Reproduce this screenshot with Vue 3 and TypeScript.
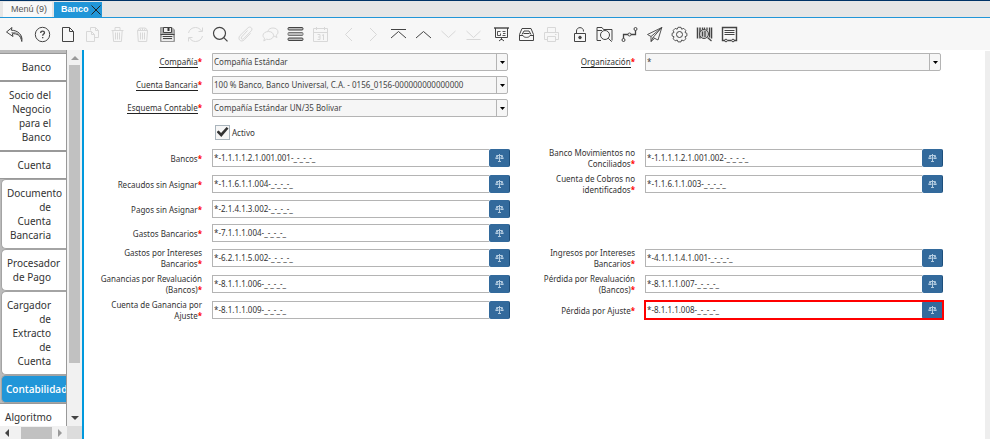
<script setup lang="ts">
import { ref } from 'vue'

interface Tool { id: string; label: string; off?: boolean; svg: string }
interface Combo { id: string; label: string; value: string }
interface Account { id: string; label: string; value: string; marked?: boolean }

const toolGroups: Tool[][] = [
  [
    { id: 'undo', label: 'Deshacer', svg: '<path d="M6 1.500.5 6l6.500 4.500-.7-2.800C11 7.500 14.500 9 15.800 15.500 17 9 12 4.300 5.300 4.200z"/><path d="M5.500 6.500c5-.5 9 2 10.300 6.500" stroke-width=".6"/>' },
  ],
  [
    { id: 'help', label: 'Ayuda', svg: '<circle cx="8.500" cy="8.500" r="7.200"/><path d="M6.700 7c0-1.200.8-1.800 1.900-1.800s1.900.7 1.900 1.600c0 1.300-1.800 1.300-1.800 2.900M8.700 11v1.200" stroke-width="1.300"/>' },
    { id: 'new', label: 'Nuevo', svg: '<path d="M3.500 1.500h7l4 4v10h-11zM10.500 1.500v4h4"/>' },
    { id: 'copy', label: 'Copiar', off: true, svg: '<path d="M6.500 4.500v-3h5l3 3v7h-4M11.500 1.500v3h3M2.500 5.500h5l3 3v7h-8zM7.500 5.500v3h3"/>' },
    { id: 'delete', label: 'Eliminar', off: true, svg: '<path d="M2.500 4.500h12M6 4.500v-3h5v3M3.800 4.500l.8 11h7.800l.8-11M6.500 6.500v7M8.500 6.500v7M10.500 6.500v7"/>' },
    { id: 'deleteAll', label: 'Eliminar selección', off: true, svg: '<path d="M3.500 4.500h10l-.8 11H4.300zM3.500 4.500 5.500 2h6l2 2.500M5.500 2l1.500 2.500M8.500 2v2.500M11.500 2 10 4.500M6.500 6.500v7M8.500 6.500v7M10.500 6.500v7"/>' },
    { id: 'save', label: 'Guardar', svg: '<path d="M1.500 1.500H13L15.500 4v11.500h-14z" fill="#aaa" stroke="#999"/><path d="M4.500 1.500v5h8v-5z" fill="#eee" stroke="#444"/><path d="M9.500 2v3" stroke="#333" stroke-width="2"/><path d="M3 9.500h11M3 11.500h11v3H3z" fill="#ddd" stroke="#eee"/><path d="M1.500 8.500h14M4 10.500h9M4 12.500h9" stroke="#444"/>' },
  ],
  [
    { id: 'refresh', label: 'Refrescar', off: true, svg: '<path d="M1.500 7C2.200 3.700 5 1.500 8.500 1.500c2.500 0 4.700 1.300 6 3.500M15.500 1.500v4h-4M15.500 10c-.7 3.300-3.500 5.500-7 5.500-2.500 0-4.700-1.300-6-3.500M1.500 15.500v-4h4"/>' },
    { id: 'find', label: 'Buscar', svg: '<circle cx="7.500" cy="7.300" r="6" stroke-width="1.200"/><path d="m11.800 11.600 3.700 3.700" stroke-width="1.200"/>' },
    { id: 'attach', label: 'Adjunto', off: true, svg: '<path d="m10.500 4.500-6 6.500c-1 1.500.6 3 2 1.800l7.800-8c2-2.500-1.300-5-3.300-3L3 9.500c-3 3.500 1 7.500 4.300 4.300l6.200-6.500"/>' },
    { id: 'chat', label: 'Chat', off: true, svg: '<path d="M6 5C6.500 3 8.500 2 11 2c3 0 5 1.700 5 4 0 1.500-.7 2.500-1.800 3.200l.8 2.300-3-1.500"/><path d="M6.500 5.500c3 0 5 1.700 5 4s-2 4-5 4c-.7 0-1.300-.1-1.900-.3L1.800 15l.7-2.800C1.600 11.500 1 10.600 1 9.500c0-2.300 2.500-4 5.500-4z"/>' },
    { id: 'grid', label: 'Cuadrícula', svg: '<g fill="#bbb"><rect x="1" y="1.500" width="15" height="2.500" rx="1"/><rect x="1" y="6.500" width="15" height="3" rx="1" stroke="#777"/><rect x="1" y="12" width="15" height="2.500" rx="1"/></g>' },
    { id: 'history', label: 'Historial', off: true, svg: '<path d="M1.500 2.500h14v13h-14zM1.500 6.500h14M4.500 1v3M12.500 1v3M5.500 8.500h2.500v2.500H6m2 0v2.500H5.500M10 9.500l1.500-1V14"/>' },
  ],
  [
    { id: 'prev', label: 'Padre', off: true, svg: '<path d="M12 2 5.500 8.500 12 15"/>' },
    { id: 'next', label: 'Detalle', off: true, svg: '<path d="M5 2l6.500 6.500L5 15"/>' },
    { id: 'first', label: 'Primero', svg: '<path d="M1 3.500h15M1 12l7.500-6.500L16 12"/>' },
    { id: 'up', label: 'Anterior', svg: '<path d="m1 12 7.500-6.500L16 12"/>' },
    { id: 'down', label: 'Siguiente', off: true, svg: '<path d="m1.500 5 7 6.500 7-6.500"/>' },
    { id: 'last', label: 'Último', off: true, svg: '<path d="m1.500 5 7 6.500 7-6.500M1.500 13.500h14"/>' },
  ],
  [
    { id: 'report', label: 'Reporte', svg: '<path d="M1 2h15" stroke-width="1.400"/><path d="M2.500 2v9.500h12V2M8.500 12v2M8.500 13 6 15M8.500 13l2.500 2"/><path d="M7.500 5.500h-3v4h3v-2M9.500 9.500h3M9.500 5.500h3M10 7.500h2.500" stroke-width=".9"/>' },
    { id: 'archive', label: 'Archivo', svg: '<path d="M1.500 8.500 4 2.500h9l2.500 6v6h-14zM1.500 9.500H5c.5 2.500 6.500 2.500 7 0h3.500"/><path d="M4 8.500 6 5h5l2 3.500M5.500 7.500h6"/>' },
    { id: 'print', label: 'Imprimir', off: true, svg: '<path d="M4.500 6.500v-5h8v5M4 13.500H1.500v-7h14v7H13M4.500 10.500h8v5h-8zM12 8.500h1.500"/>' },
  ],
  [
    { id: 'lock', label: 'Bloquear', svg: '<path d="M3.500 7.500h11v8h-11zM5.500 7.500V5c0-4.500 7-4.500 7 0v.5"/><circle cx="9" cy="11.500" r="1.300" fill="currentColor"/>' },
    { id: 'zoom', label: 'Zoom', svg: '<path d="M5 14.500H1v-13h5l1.500 2H16v11"/><path d="M1 4.500h5"/><circle cx="9" cy="9" r="4.500"/><path d="m12.200 12.200 3.500 3.500"/>' },
    { id: 'workflow', label: 'Flujos', svg: '<circle cx="2.500" cy="14" r="1.500"/><circle cx="8.500" cy="8.500" r="1.500"/><circle cx="14.500" cy="3" r="1.500"/><path d="M2.500 12.500v-4H7M10 8.500h4.500v-4" stroke-width="1.300"/>' },
    { id: 'send', label: 'Solicitudes', svg: '<path d="M15.800 1.500 1.500 8.500l3.500 2 10.800-9L7 11.500l5 2.500zM5 10.500v5l2-4M5 15.500l3.500-3" stroke-width=".9"/>' },
    { id: 'process', label: 'Proceso', svg: '<circle cx="8.500" cy="8.500" r="3"/><path d="m7 1.300 3 0 .6 1.900 2.200-.8 2 2-.8 2.100 1.900.8v2.600l-1.900.8.8 2.100-2 2-2.200-.8-.6 1.900H7l-.8-1.900-2 .8-2-2 .8-2.100-1.900-.8V7.300L3 6.500l-.8-2.100 2-2 2 .8z" stroke-width=".9"/>' },
    { id: 'product', label: 'Producto', svg: '<path d="M1.500 1.500v11M4 1.500v11M15.500 1.500v11" stroke-width="1.500"/><path d="M6.500 1.500v3M8.500 1.500v2M11 1.500v3M13.500 1.500v10" stroke-width="1.300"/><circle cx="8" cy="8" r="4.500" fill="#ccc"/><path d="M6.500 5.500v5M9 5v6M11.500 11.500l4 3.500" stroke-width="1.200"/>' },
    { id: 'form', label: 'Formulario', svg: '<path d="M4 14.500H1.500v-13h14v13H13M6.500 14.500h4" stroke-width="1.400"/><path d="M3.500 4.500h10M3.500 6.500h10M3.500 8.500h10"/><circle cx="5" cy="14.500" r="1.300"/><circle cx="12" cy="14.500" r="1.300"/>' },
  ],
]

const sideTabs = [
  { name: 'Banco' },
  { name: 'Socio del Negocio para el Banco' },
  { name: 'Cuenta' },
  { name: 'Documento de Cuenta Bancaria', nested: true },
  { name: 'Procesador de Pago', nested: true },
  { name: 'Cargador de Extracto de Cuenta', nested: true },
  { name: 'Contabilidad', nested: true },
  { name: 'Algoritmo' },
]
const current = ref('Contabilidad')
const active = ref(true)

const combos: (Combo | null)[][] = [
  [{ id: 'client', label: 'Compañía', value: 'Compañía Estándar' }, { id: 'org', label: 'Organización', value: '*' }],
  [{ id: 'account', label: 'Cuenta Bancaria', value: '100 % Banco, Banco Universal, C.A. - 0156_0156-000000000000000' }, null],
  [{ id: 'schema', label: 'Esquema Contable', value: 'Compañía Estándar UN/35 Bolivar' }, null],
]

const accounts = ref<(Account | null)[][]>([
  [{ id: 'asset', label: 'Bancos', value: '*-1.1.1.1.2.1.001.001-_-_-_-_' }, { id: 'transit', label: 'Banco Movimientos no Conciliados', value: '*-1.1.1.1.2.1.001.002-_-_-_-_' }],
  [{ id: 'unallocated', label: 'Recaudos sin Asignar', value: '*-1.1.6.1.1.004-_-_-_-_' }, { id: 'unidentified', label: 'Cuenta de Cobros no identificados', value: '*-1.1.6.1.1.003-_-_-_-_' }],
  [{ id: 'payment', label: 'Pagos sin Asignar', value: '*-2.1.4.1.3.002-_-_-_-_' }, null],
  [{ id: 'expense', label: 'Gastos Bancarios', value: '*-7.1.1.1.004-_-_-_-_' }, null],
  [{ id: 'interestExp', label: 'Gastos por Intereses Bancarios', value: '*-6.2.1.1.5.002-_-_-_-_' }, { id: 'interestRev', label: 'Ingresos por Intereses Bancarios', value: '*-4.1.1.1.4.1.001-_-_-_-_' }],
  [{ id: 'revalGain', label: 'Ganancias por Revaluación (Bancos)', value: '*-8.1.1.1.006-_-_-_-_' }, { id: 'revalLoss', label: 'Pérdida por Revaluación (Bancos)', value: '*-8.1.1.1.007-_-_-_-_' }],
  [{ id: 'settleGain', label: 'Cuenta de Ganancia por Ajuste', value: '*-8.1.1.1.009-_-_-_-_' }, { id: 'settleLoss', label: 'Pérdida por Ajuste', value: '*-8.1.1.1.008-_-_-_-_', marked: true }],
])
</script>

<template>
  <div class="window">
    <nav class="window-tabs" aria-label="Ventanas">
      <button class="window-tab" type="button">Menú (9)</button>
      <div class="window-tab selected">
        <button class="tab-name" type="button">Banco</button>
        <button class="tab-close" type="button" aria-label="Cerrar">
          <svg viewBox="0 0 10 10" width="10" height="10"><path d="M.5.5l9 9M9.500.5l-9 9" /></svg>
        </button>
      </div>
    </nav>

    <div class="toolbar" role="toolbar" aria-label="Acciones">
      <div v-for="(group, g) in toolGroups" :key="g" class="tool-group">
        <button v-for="tool in group" :key="tool.id" class="tool" type="button" :disabled="tool.off" :aria-label="tool.label">
          <svg viewBox="0 0 17 17" width="17" height="17" v-html="tool.svg"></svg>
        </button>
      </div>
    </div>

    <div class="body">
      <aside class="side">
        <div class="side-view">
          <nav class="side-tabs" aria-label="Pestañas">
            <button
              v-for="tab in sideTabs" :key="tab.name" type="button" class="side-tab"
              :class="{ nested: tab.nested, current: tab.name === current }" @click="current = tab.name"
            ><span>{{ tab.name }}</span></button>
          </nav>
          <div class="vbar">
            <svg viewBox="0 0 8 4" width="8" height="4" class="dim"><path d="M0 4 4 0l4 4z" /></svg>
            <div class="vtrack"><div class="vthumb"></div></div>
            <svg viewBox="0 0 8 4" width="8" height="4"><path d="m0 0 4 4 4-4z" /></svg>
          </div>
        </div>
        <div class="hbar-row">
          <div class="hbar">
            <svg viewBox="0 0 4 8" width="4" height="8"><path d="M4 0 0 4l4 4z" /></svg>
            <div class="htrack"><div class="hthumb"></div></div>
            <svg viewBox="0 0 4 8" width="4" height="8" class="dim"><path d="m0 0 4 4-4 4z" /></svg>
          </div>
          <div class="corner"></div>
        </div>
      </aside>

      <main class="form-area">
        <form class="form" @submit.prevent>
          <div v-for="(row, r) in combos" :key="r" class="row combo-row">
            <template v-for="(field, c) in row" :key="c">
              <template v-if="field">
                <div class="label"><label :for="field.id"><span class="linked">{{ field.label }}</span><b>*</b></label></div>
                <div class="combo">
                  <select :id="field.id"><option>{{ field.value }}</option></select>
                  <span class="combo-arrow"><svg viewBox="0 0 5 3" width="5" height="3"><path d="M0 0h5L2.500 3z" /></svg></span>
                </div>
              </template>
            </template>
          </div>

          <div class="row check-row">
            <div class="check">
              <input id="active" v-model="active" type="checkbox" />
              <label for="active">Activo</label>
            </div>
          </div>

          <div v-for="(row, r) in accounts" :key="'a' + r" class="row">
            <template v-for="(field, c) in row" :key="c">
              <template v-if="field">
                <div class="label"><label :for="field.id">{{ field.label }}<b>*</b></label></div>
                <div class="account" :class="{ marked: field.marked }">
                  <input :id="field.id" v-model="field.value" type="text" />
                  <button type="button" :aria-label="'Buscar ' + field.label">
                    <svg viewBox="0 0 9 8" width="9" height="8">
                      <path d="M4.500 0v7M3 7.500h3M1.500 1.500h6M2 1.500.7 4.500h2.600zM7 1.500 5.700 4.500h2.600z" />
                    </svg>
                  </button>
                </div>
              </template>
            </template>
          </div>
        </form>
      </main>
      <div class="east"></div>
    </div>
  </div>
</template>

<style>
body { margin: 0; }
</style>

<style scoped>
.window {
  display: flex;
  flex-direction: column;
  height: 100vh;
  overflow: hidden;
  background: #fff;
  color: #333;
  font: 8px/11px "Noto Sans", sans-serif;
}
button, input, select { box-sizing: border-box; margin: 0; padding: 0; border: 0; background: none; color: inherit; font: inherit; }
svg { display: block; flex: none; }

.window-tabs {
  display: flex;
  gap: 2px;
  box-sizing: border-box;
  height: 18px;
  padding: 1px 3px 0;
  border-top: 1px solid #003366;
  border-bottom: 1px solid #2196d8;
  background: #e6e6e6;
  font-family: "Liberation Sans", sans-serif;
  font-size: 9px;
}
.window-tab { display: flex; align-items: center; padding: 0 5px 0 8px; background: #f8f8f8; color: #555; }
.window-tab.selected { gap: 2px; padding: 0 1px 0 7px; background: #2196d8; color: #fff; font-weight: bold; }
.tab-close svg { fill: none; stroke: #222; }

.toolbar { display: flex; gap: 3px; height: 32px; padding-left: 2px; background: #f7f7f7; }
.tool-group { display: flex; }
.tool { display: flex; align-items: flex-start; justify-content: center; width: 25px; padding-top: 8px; color: #444; }
.tool:disabled { color: #d8d8d8; }
.tool svg { fill: none; stroke: currentColor; }

.body { display: flex; flex: 1; min-height: 0; }
.side { display: flex; flex: none; flex-direction: column; width: 82px; border-right: 2px solid #0099dd; }
.side-view { display: flex; flex: 1; min-height: 0; }
.side-tabs { flex: 1; min-width: 0; overflow: hidden; padding-top: 3px; border-right: 1px solid #999; background: #bbb; }
.side-tab {
  display: block;
  width: 100%;
  padding: 6px 15px 6px 5px;
  border-top: 1px solid #999;
  border-bottom: 1px solid #999;
  background: #fff;
  font-size: 10px;
  line-height: 14px;
  text-align: right;
}
.side-tab span { display: block; }
.side-tab.nested {
  width: calc(100% - 1px);
  margin-left: 1px;
  border: 1px solid #a4a4a4;
  border-right: 0;
  border-radius: 5px 0 0 5px;
}
.side-tab.current { padding-left: 4px; background: #2196d8; color: #fff; font-family: "Open Sans", sans-serif; font-weight: 600; }
.vbar { display: flex; flex-direction: column; align-items: center; gap: 5px; width: 15px; padding: 6px 0; background: #f1f1f1; fill: #444; }
.vbar .dim, .hbar .dim { fill: #999; }
.vtrack { flex: 1; align-self: stretch; padding: 0 2px; }
.vthumb { height: 86%; background: #c1c1c1; }
.hbar-row { display: flex; height: 13px; }
.hbar { display: flex; flex: 1; align-items: center; gap: 6px; padding: 0 5px; background: #f1f1f1; fill: #444; }
.htrack { display: flex; flex: 1; align-self: stretch; padding: 1px 0 0 6px; }
.hthumb { flex: 1; background: #c1c1c1; }
.corner { width: 15px; background: #dcdcdc; }
.east { width: 5px; margin-top: 1px; background: #eee; }

.form-area { flex: 1; min-width: 0; padding-right: 42px; }
.row {
  display: grid;
  grid-template-columns: 118fr 298fr 115fr 298fr;
  column-gap: 10px;
  align-items: center;
  min-height: 24px;
}
.label { padding: 2px 0 2px 12px; text-align: right; }
.label b { color: #f00; }
.linked { border-bottom: 1px solid #222; }
.combo-row { min-height: 23px; }
.combo { display: flex; position: relative; height: 18px; margin: 3px 2px 2px 0; }
.combo select {
  width: 100%;
  padding: 0 14px 1px 1px;
  border: 1px solid #b4b4b4;
  border-radius: 0 2px 2px 0;
  appearance: none;
  background: #f6f6f6;
  color: #444;
}
.combo-arrow {
  position: absolute;
  inset: 0 0 0 auto;
  display: grid;
  place-items: center;
  width: 11px;
  border-left: 1px solid #b4b4b4;
  pointer-events: none;
}
.check-row { min-height: 26px; }
.check { display: flex; grid-column: 2; align-items: center; gap: 2px; padding-left: 3px; }
.check input { display: grid; place-items: center; width: 15px; height: 15px; border: 1px solid #a9b4bc; appearance: none; background: #f6f6f6; }
.check input:checked::before { content: ""; width: 12px; height: 10px; background: #333; clip-path: polygon(0 50%, 18% 36%, 38% 60%, 84% 0, 100% 14%, 40% 100%); }
.account { display: flex; height: 18px; }
.account input { flex: 1; min-width: 0; padding: 0 1px 1px; border: 1px solid #b4b4b4; border-right: 0; background: #fff; }
.account button { display: grid; place-items: center; width: 21px; border-right: 1px solid #1d4f7c; border-radius: 2px; background: #336a9c; }
.account svg { fill: none; stroke: #b4cce0; }
.marked { outline: 2px solid #f00; outline-offset: -1px; }
</style>
